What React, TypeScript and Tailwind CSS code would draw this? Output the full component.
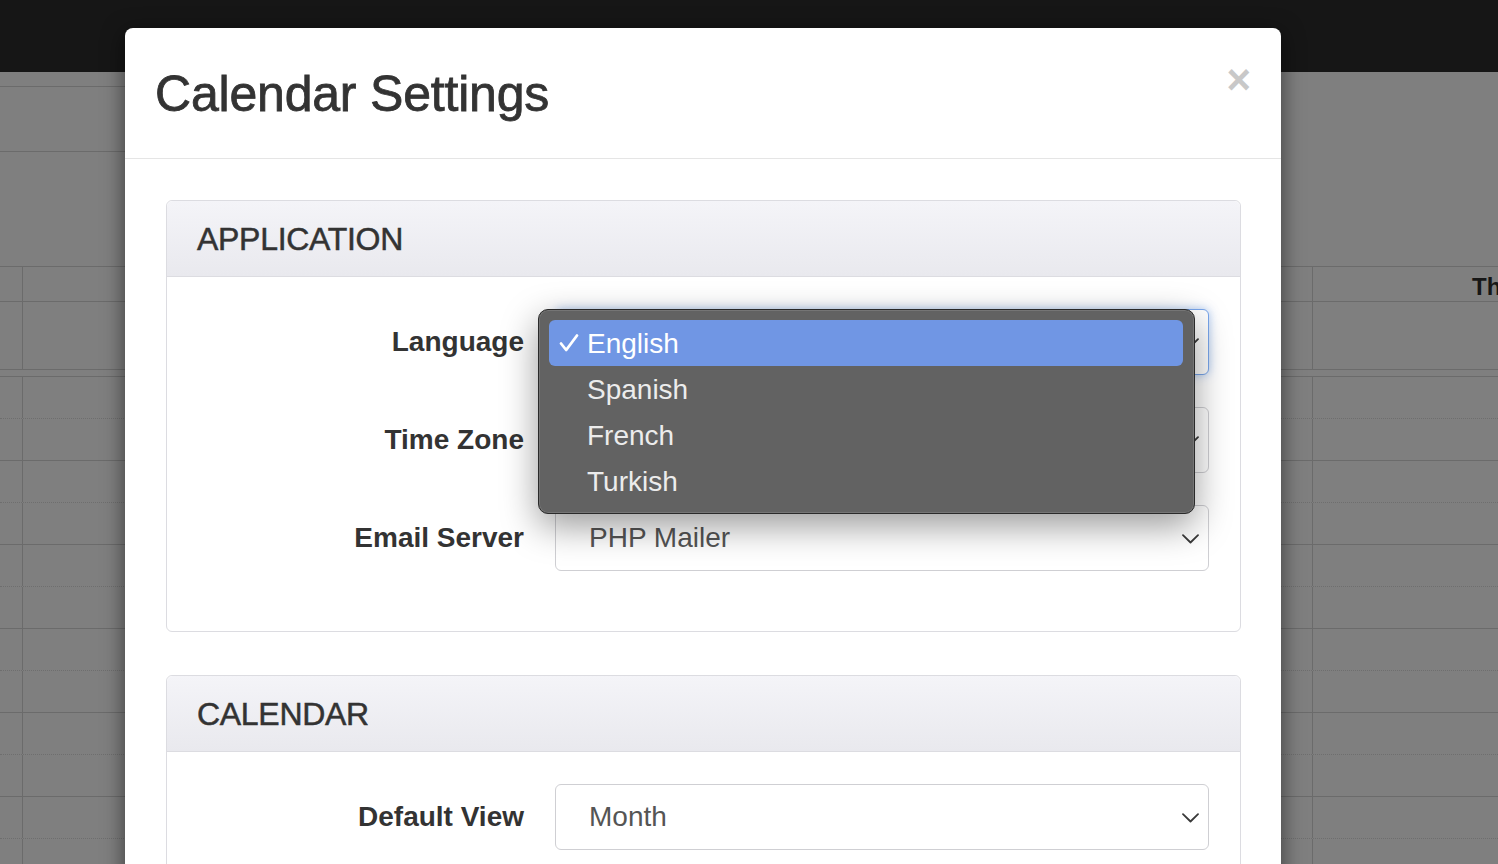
import React from "react";

const font = { fontFamily: '"Liberation Sans", Arial, sans-serif' };

function Chevron() {
  return (
    <svg className="absolute right-[9px] top-1/2 -translate-y-1/2 mt-[1px] h-[10px] w-[17px]" viewBox="0 0 17 10" fill="none">
      <path d="M1 1.2 8.5 8.5 16 1.2" stroke="#3a3a3a" strokeWidth="1.8" strokeLinecap="round" strokeLinejoin="round" />
    </svg>
  );
}

function SelectBox({ value, focused }: { value: string; focused?: boolean }) {
  return (
    <div
      className={`relative h-[66px] rounded-md border bg-white flex items-center pl-[33px] text-[28px] text-[#555] ${
        focused
          ? "border-[#79a6ec] shadow-[0_0_10px_rgba(102,155,233,0.55)]"
          : "border-[#cfcfd3]"
      }`}
    >
      {value}
      <Chevron />
    </div>
  );
}

function CheckMark() {
  return (
    <svg className="h-[20px] w-[20px]" viewBox="0 0 20 20" fill="none">
      <path d="M2 10.5 7.2 17 18 2.5" stroke="white" strokeWidth="2.8" strokeLinecap="round" strokeLinejoin="round" />
    </svg>
  );
}

function LanguageMenu() {
  const items = ["English", "Spanish", "French", "Turkish"];
  return (
    <div className="absolute left-[-17px] top-0 z-20 w-[657px] h-[205px] rounded-[10px] border border-[#2a2a2a] bg-[#626262] p-[10px] pr-[11px] shadow-[0_12px_36px_rgba(0,0,0,0.4),inset_0_0_0_1px_rgba(255,255,255,0.12)]">
      {items.map((item, i) => (
        <div
          key={item}
          className={`h-[46px] flex items-center rounded-md text-[28px] ${
            i === 0 ? "bg-[#7096e4] text-white" : "text-[#ececec]"
          }`}
        >
          <span className="w-[38px] pl-[10px] flex items-center">{i === 0 ? <CheckMark /> : null}</span>
          <span className="pt-[2px]">{item}</span>
        </div>
      ))}
    </div>
  );
}

function FormRow({ label, value, focused, menu }: { label: string; value: string; focused?: boolean; menu?: boolean }) {
  return (
    <div className="grid grid-cols-[357px_1fr] gap-x-[31px] items-center">
      <label className="text-right text-[28px] font-bold text-[#333]">{label}</label>
      <div className="relative">
        <SelectBox value={value} focused={focused} />
        {menu && <LanguageMenu />}
      </div>
    </div>
  );
}

function Panel({ title, children }: { title: string; children: React.ReactNode }) {
  return (
    <div className="rounded-md border border-[#dcdce1] bg-white">
      <div className="h-[76px] flex items-center px-[30px] rounded-t-md border-b border-[#dcdce1] bg-linear-to-b from-[#f4f4f8] to-[#e9e9ee]">
        <h3 className="text-[32px] text-[#333] tracking-[-0.3px] [-webkit-text-stroke:0.5px_#333]">{title}</h3>
      </div>
      {children}
    </div>
  );
}

function Background() {
  const slots = Array.from({ length: 12 });
  return (
    <div className="absolute inset-0 bg-[#7f7f7f]">
      <div className="h-[72px] bg-[#161616]" />
      <div className="h-[194px] w-[700px] pt-[14px]">
        <div className="h-[66px] border-y border-[#6b6b6b]" />
      </div>
      <div className="grid grid-cols-[23px_1290px_1fr] h-[36px] border-y border-[#6b6b6b]">
        <div className="border-r border-[#6b6b6b]" />
        <div className="border-r border-[#6b6b6b]" />
        <div className="pl-[159px] pt-[3px] text-[24px] font-bold text-[#161616] leading-[34px] whitespace-nowrap">Thu 1/5</div>
      </div>
      <div className="grid grid-cols-[23px_1290px_1fr] h-[68px] border-b border-[#6b6b6b]">
        <div className="border-r border-[#6b6b6b]" />
        <div className="border-r border-[#6b6b6b]" />
        <div />
      </div>
      <div className="h-[7px] border-b border-[#6b6b6b]" />
      {slots.map((_, i) => (
        <div
          key={i}
          className={`grid grid-cols-[23px_1290px_1fr] h-[42px] border-b ${
            i % 2 === 0 ? "border-dotted border-[#6e6e6e]" : "border-solid border-[#6b6b6b]"
          }`}
        >
          <div className="border-r border-solid border-[#6b6b6b]" />
          <div className="border-r border-solid border-[#6b6b6b]" />
          <div />
        </div>
      ))}
    </div>
  );
}

export default function App() {
  return (
    <div className="relative w-screen h-screen overflow-hidden" style={font}>
      <Background />

      <div className="absolute left-[125px] top-[28px] w-[1156px] rounded-lg bg-white shadow-[0_5px_22px_rgba(0,0,0,0.55)]">
        <div className="relative h-[131px] flex items-center px-[30px] border-b border-[#e5e5e5]">
          <h2 className="text-[50px] text-[#333] tracking-[-0.2px] pt-[2px] [-webkit-text-stroke:0.8px_#333]">Calendar Settings</h2>
          <button className="absolute right-[30px] top-[31px] text-[42px] font-bold leading-none text-[#c8c8c8]">×</button>
        </div>

        <div className="pl-[41px] pr-[40px] pt-[41px] pb-[60px] space-y-[43px]">
          <Panel title="APPLICATION">
            <div className="pt-[32px] pb-[60px] pr-[31px] space-y-[32px]">
              <FormRow label="Language" value="English" focused menu />
              <FormRow label="Time Zone" value="" />
              <FormRow label="Email Server" value="PHP Mailer" />
            </div>
          </Panel>

          <Panel title="CALENDAR">
            <div className="pt-[32px] pb-[60px] pr-[31px] space-y-[32px]">
              <FormRow label="Default View" value="Month" />
            </div>
          </Panel>
        </div>
      </div>
    </div>
  );
}
